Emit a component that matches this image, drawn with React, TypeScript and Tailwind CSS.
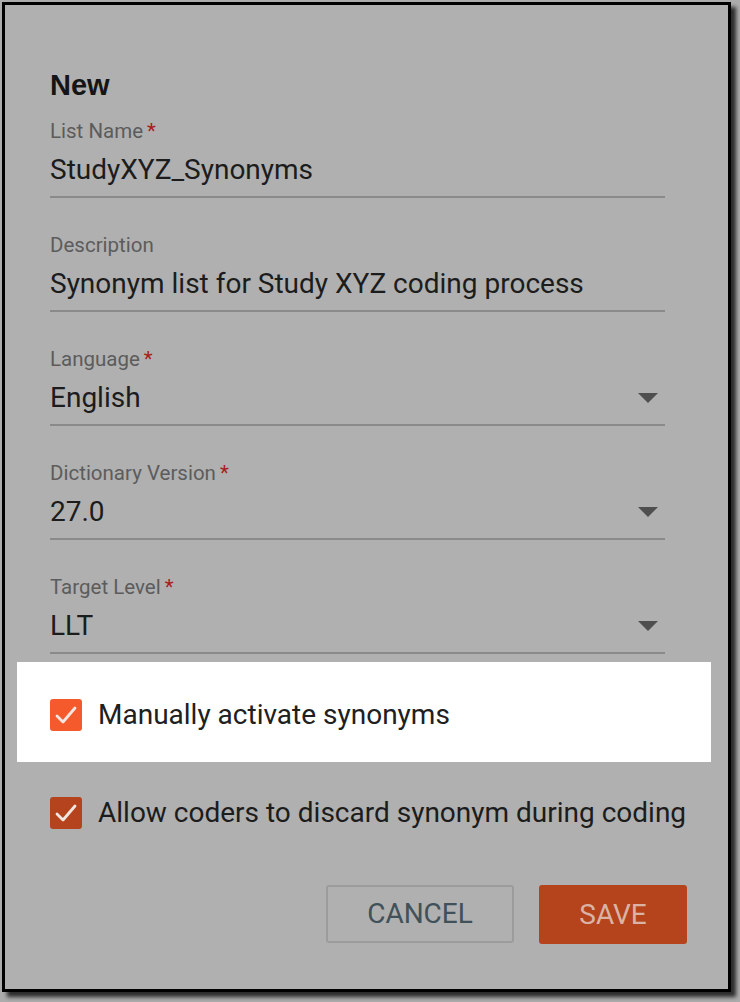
import React from 'react';

const FONT = { fontFamily: 'Roboto, "Liberation Sans", sans-serif' };

type FieldProps = {
  label: string;
  value: string;
  required?: boolean;
  select?: boolean;
};

function Field({ label, value, required, select }: FieldProps) {
  return (
    <div className="mb-[35px]">
      <div className="h-6 text-[20.5px] leading-6 text-[#5c5c5c]">
        {label}
        {required && <span className="ml-1 text-[#a91c1c]">*</span>}
      </div>
      <div className="mt-[9px] flex items-center justify-between border-b-2 border-[#8a8a8a] pb-2">
        <span className="h-9 text-[28px] leading-9 text-[#1c1c1c]">{value}</span>
        {select && (
          <svg width="20" height="11" viewBox="0 0 20 11" className="mr-[7px]">
            <path d="M0 0 L20 0 L10 10 Z" fill="#4f4f4f" />
          </svg>
        )}
      </div>
    </div>
  );
}

function Check({ color }: { color: string }) {
  return (
    <span
      className="flex h-8 w-8 shrink-0 items-center justify-center rounded-[3px]"
      style={{ backgroundColor: color }}
    >
      <svg width="32" height="32" viewBox="0 0 32 32" fill="none">
        <path d="M7 17 L13 23 L25 9" stroke="#f3e6e0" strokeWidth="2.8" strokeLinecap="round" strokeLinejoin="round" />
      </svg>
    </span>
  );
}

export default function App() {
  return (
    <div className="h-[1002px] w-[740px] bg-[#acacac] pl-[2px] pt-[2px]" style={FONT}>
      <div className="h-[990px] w-[729px] border-[3px] border-black bg-[#b0b0b0] pl-[45px] pr-[63px] pt-[64px] shadow-[5px_5px_4px_rgba(0,0,0,0.75)]">
        <h2 className="h-8 font-['Liberation_Sans',Arial,sans-serif] text-[29px] font-bold leading-8 text-[#151515]">
          New
        </h2>
        <div className="mt-[18px]">
          <Field label="List Name" value="StudyXYZ_Synonyms" required />
          <Field label="Description" value="Synonym list for Study XYZ coding process" />
          <Field label="Language" value="English" required select />
          <Field label="Dictionary Version" value="27.0" required select />
          <div className="-mb-[27px]">
            <Field label="Target Level" value="LLT" required select />
          </div>
        </div>

        <div className="-ml-[33px] -mr-[46px] flex h-[100px] items-center gap-4 bg-white pl-[33px] pt-[6px]">
          <Check color="#f45a2c" />
          <span className="text-[28px] text-[#202020]">Manually activate synonyms</span>
        </div>

        <div className="mt-[30px] flex items-center gap-4">
          <Check color="#b5441e" />
          <span className="whitespace-nowrap text-[28px] text-[#1c1c1c]">
            Allow coders to discard synonym during coding
          </span>
        </div>

        <div className="-mr-[22px] mt-[51px] flex justify-end gap-[25px]">
          <button className="h-[58px] w-[188px] rounded-[3px] border-2 border-[#9c9c9c] text-[28px] text-[#415159]">
            CANCEL
          </button>
          <button className="h-[59px] w-[148px] rounded-[3px] bg-[#b5431c] text-[28px] text-[#d9b4a6]">
            SAVE
          </button>
        </div>
      </div>
    </div>
  );
}
